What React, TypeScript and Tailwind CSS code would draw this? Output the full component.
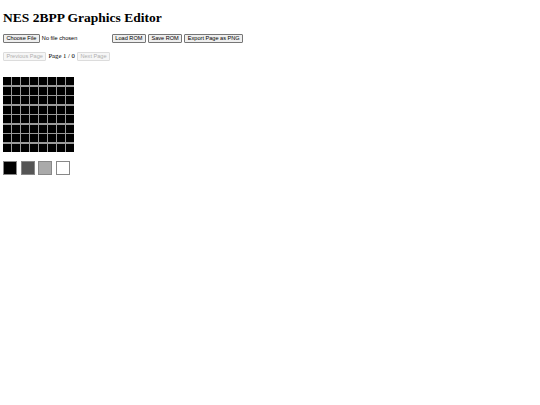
import React from "react";

const btn =
  "h-[9px] px-[2.5px] border border-[#767676] rounded-[1px] bg-[#efefef] text-black text-[5.6px] leading-none font-['Liberation_Sans',Arial,sans-serif] flex items-center";
const btnDis =
  "h-[9px] px-[2.5px] border border-[#dcdcdc] rounded-[1px] bg-[#f6f6f6] text-[#b0b0b0] text-[5.6px] leading-none font-['Liberation_Sans',Arial,sans-serif] flex items-center";

export default function App() {
  const cells = Array.from({ length: 64 });
  return (
    <div className="w-[540px] h-[405px] bg-white pl-[3px] pt-[10px] font-['Liberation_Serif','Times_New_Roman',serif] text-black">
      <h1 className="text-[13.5px] font-bold leading-[15px]">NES 2BPP Graphics Editor</h1>
      <div className="mt-[9px] flex items-center h-[9px]">
        <button className={btn}>Choose File</button>
        <span className="ml-[2px] w-[70px] text-[5.6px] leading-none font-['Liberation_Sans',Arial,sans-serif]">No file chosen</span>
        <div className="flex gap-[2px]">
          <button className={btn}>Load ROM</button>
          <button className={btn}>Save ROM</button>
          <button className={btn}>Export Page as PNG</button>
        </div>
      </div>
      <div className="mt-[9px] flex items-center h-[9px] gap-[2px]">
        <button className={btnDis} disabled>Previous Page</button>
        <span className="text-[6.7px] leading-none">Page 1 / 0</span>
        <button className={btnDis} disabled>Next Page</button>
      </div>
      <div className="mt-[16px] grid grid-cols-[repeat(8,8px)] gap-x-[1px] gap-y-[1.5px] w-fit bg-[#9a9a9a]">
        {cells.map((_, i) => (
          <div key={i} className="w-[8px] h-[8px] bg-black" />
        ))}
      </div>
      <div className="mt-[9.5px] flex gap-[3.5px]">
        <div className="w-[14px] h-[14px] bg-black border border-[#888]" />
        <div className="w-[14px] h-[14px] bg-[#555555] border border-[#888]" />
        <div className="w-[14px] h-[14px] bg-[#aaaaaa] border border-[#888]" />
        <div className="w-[14px] h-[14px] bg-white border border-[#888]" />
      </div>
    </div>
  );
}
